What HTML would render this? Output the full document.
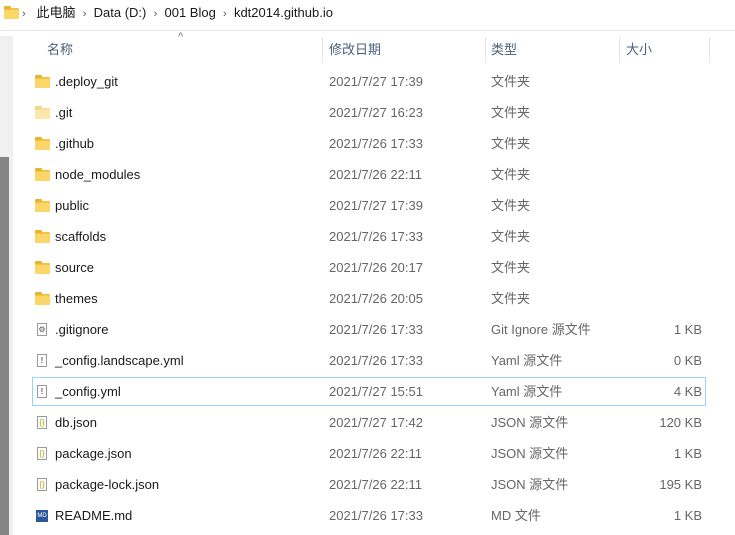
<!DOCTYPE html>
<html><head><meta charset="utf-8"><style>
*{margin:0;padding:0;box-sizing:border-box}
body{width:735px;height:535px;overflow:hidden;background:#fff;font-family:"Liberation Sans","Noto Sans CJK SC",sans-serif;font-size:13px;position:relative;color:#1a1a1a}
.abs{position:absolute;white-space:nowrap;line-height:18px;height:18px}
.bc{top:4px;font-size:13px;color:#1a1a1a}
.chev{color:#555;font-size:11px}
.g{color:#666}
.hdr{color:#4c607a;top:41px}
.vl{position:absolute;top:37px;height:26px;width:1px;background:#e5e5e5}
.folder{position:absolute;width:15px;height:11px;background:#f5c542;border-radius:1px}
.folder:before{content:"";position:absolute;left:0;top:-2px;width:7px;height:3px;background:#e8b530;border-radius:1px 1px 0 0}
.folder:after{content:"";position:absolute;left:0;top:2px;width:15px;height:9px;background:#fcd669;border-radius:1px}
.file{position:absolute;width:10px;height:13px;border:1px solid #9a9a9a;background:#fff;font-size:8px;line-height:11px;text-align:center}
</style></head><body>
<div class="folder" style="left:4px;top:8px"></div>
<div class="abs bc" style="left:22px"><span class="chev">›</span>&nbsp;&nbsp; 此电脑 &nbsp;<span class="chev">›</span>&nbsp; Data (D:) &nbsp;<span class="chev">›</span>&nbsp; 001 Blog &nbsp;<span class="chev">›</span>&nbsp; kdt2014.github.io</div>
<div class="abs" style="left:0;top:30px;width:735px;height:1px;background:#e8e8e8"></div>
<div class="abs" style="left:0;top:36px;width:13px;height:499px;background:#f0f0f0"></div>
<div class="abs" style="left:0;top:157px;width:9px;height:378px;background:#858585"></div>
<div class="abs" style="left:178px;top:28px;color:#777;font-size:11px">^</div>
<div class="abs hdr" style="left:47px">名称</div>
<div class="vl" style="left:322px"></div>
<div class="abs hdr" style="left:329px">修改日期</div>
<div class="vl" style="left:485px"></div>
<div class="abs hdr" style="left:491px">类型</div>
<div class="vl" style="left:619px"></div>
<div class="abs hdr" style="left:626px">大小</div>
<div class="vl" style="left:709px"></div>
<div class="abs" style="left:32px;top:377px;width:674px;height:29px;border:1px solid #99d1ff"></div>
<div id="rows"></div>
<script>
var R=[["f",".deploy_git","2021/7/27 17:39","文件夹",""],["f2",".git","2021/7/27 16:23","文件夹",""],["f",".github","2021/7/26 17:33","文件夹",""],["f","node_modules","2021/7/26 22:11","文件夹",""],["f","public","2021/7/27 17:39","文件夹",""],["f","scaffolds","2021/7/26 17:33","文件夹",""],["f","source","2021/7/26 20:17","文件夹",""],["f","themes","2021/7/26 20:05","文件夹",""],["g",".gitignore","2021/7/26 17:33","Git Ignore 源文件","1 KB"],["y","_config.landscape.yml","2021/7/26 17:33","Yaml 源文件","0 KB"],["y","_config.yml","2021/7/27 15:51","Yaml 源文件","4 KB"],["j","db.json","2021/7/27 17:42","JSON 源文件","120 KB"],["j","package.json","2021/7/26 22:11","JSON 源文件","1 KB"],["j","package-lock.json","2021/7/26 22:11","JSON 源文件","195 KB"],["m","README.md","2021/7/26 17:33","MD 文件","1 KB"]];
var h="";R.forEach(function(r,i){var c=82+31*i,t=c-9;
if(r[0][0]=="f")h+='<div class="folder" style="left:35px;top:'+(c-5)+'px'+(r[0]=="f2"?';opacity:.55':'')+'"></div>';
else if(r[0]=="g")h+='<div class="file" style="left:37px;top:'+(c-7)+'px;color:#555">⚙</div>';
else if(r[0]=="y")h+='<div class="file" style="left:37px;top:'+(c-7)+'px;color:#8a3fc0;font-weight:bold">!</div>';
else if(r[0]=="j")h+='<div class="file" style="left:37px;top:'+(c-7)+'px;color:#b8a000">{}</div>';
else h+='<div class="abs" style="left:36px;top:'+(c-6)+'px;width:12px;height:12px;background:#2b5797;color:#fff;font-size:6px;line-height:12px;text-align:center">MD</div>';
h+='<div class="abs" style="left:55px;top:'+t+'px">'+r[1]+'</div>';
h+='<div class="abs g" style="left:329px;top:'+t+'px">'+r[2]+'</div>';
h+='<div class="abs g" style="left:491px;top:'+t+'px">'+r[3]+'</div>';
h+='<div class="abs g" style="right:33px;top:'+t+'px">'+r[4]+'</div>';});
document.getElementById("rows").innerHTML=h;
</script>
</body></html>
